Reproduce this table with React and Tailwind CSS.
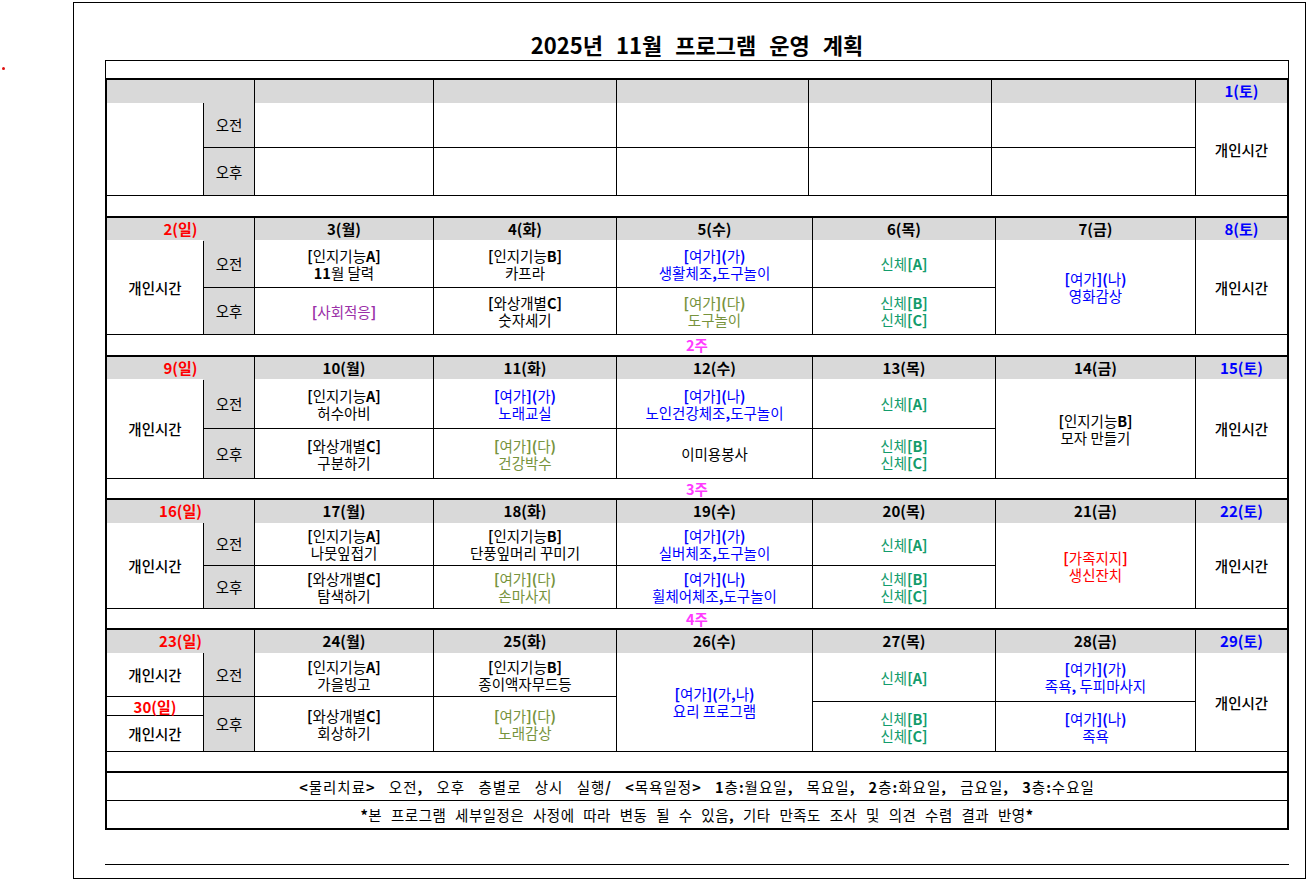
import React from "react"

// 색상
const RED = "text-[#ff0000]"
const BLUE = "text-[#0000ff]"
const OLIVE = "text-[#77933c]"
const TEAL = "text-[#139c6c]"
const PURPLE = "text-[#9b30a8]"
const PINK = "text-[#ff3cff]"

const GRID_TOP = "grid grid-cols-[96px_50px_178px_182px_191px_182px_203px_91px] gap-px"
const GRID_WEEK = "grid grid-cols-[96px_50px_178px_182px_195px_182px_199px_91px] gap-px"

// 영문/숫자는 원본처럼 굵게 보이도록
function Mixed({ text }) {
  const parts = text.split(/([!-~]+)/)
  return (
    <span className="whitespace-pre">
      {parts.map((p, i) =>
        /^[!-~]+$/.test(p) ? (
          <span key={i} className="font-bold">{p}</span>
        ) : (
          <span key={i}>{p}</span>
        )
      )}
    </span>
  )
}

function Cell({ lines = [], color = "text-black", className = "" }) {
  return (
    <div className={`bg-white flex flex-col items-center justify-center text-center text-[14.5px] leading-[17px] ${color} ${className}`}>
      {lines.map((l, i) => (
        <Mixed key={i} text={l} />
      ))}
    </div>
  )
}

function Gray({ children, className = "" }) {
  return (
    <div className={`bg-[#d9d9d9] flex items-center justify-center text-[14.5px] ${className}`}>{children}</div>
  )
}

function HeaderRow({ days, grid, height = "h-[21px]" }) {
  return (
    <div className={`${grid} ${height}`}>
      {days.map((d, i) => (
        <div
          key={i}
          className={`bg-[#d9d9d9] flex items-center justify-center text-[15px] font-bold ${i === 0 ? "col-span-2" : ""} ${d.color || "text-black"}`}
        >
          {d.label}
        </div>
      ))}
    </div>
  )
}

function WeekLabel({ text, height = "h-[20px]" }) {
  return (
    <div className={`mt-px bg-white ${height} flex items-center justify-center text-[14.5px] font-bold ${PINK}`}>
      {text}
    </div>
  )
}

const personal = ["개인시간"]

const weeks = [
  {
    days: [
      { label: "2(일)", color: RED },
      { label: "3(월)" },
      { label: "4(화)" },
      { label: "5(수)" },
      { label: "6(목)" },
      { label: "7(금)" },
      { label: "8(토)", color: BLUE },
    ],
    headerH: "h-[20px]",
    rows: "grid-rows-[47px_46px]",
    am: [
      { lines: ["[인지기능A]", "11월 달력"] },
      { lines: ["[인지기능B]", "카프라"] },
      { lines: ["[여가](가)", "생활체조,도구놀이"], color: BLUE },
      { lines: ["신체[A]"], color: TEAL },
    ],
    pm: [
      { lines: ["[사회적응]"], color: PURPLE },
      { lines: ["[와상개별C]", "숫자세기"] },
      { lines: ["[여가](다)", "도구놀이"], color: OLIVE },
      { lines: ["신체[B]", "신체[C]"], color: TEAL },
    ],
    fri: { lines: ["[여가](나)", "영화감상"], color: BLUE },
    label: "2주",
    labelH: "h-[20px]",
  },
  {
    days: [
      { label: "9(일)", color: RED },
      { label: "10(월)" },
      { label: "11(화)" },
      { label: "12(수)" },
      { label: "13(목)" },
      { label: "14(금)" },
      { label: "15(토)", color: BLUE },
    ],
    headerH: "h-[20px]",
    rows: "grid-rows-[49px_49px]",
    am: [
      { lines: ["[인지기능A]", "허수아비"] },
      { lines: ["[여가](가)", "노래교실"], color: BLUE },
      { lines: ["[여가](나)", "노인건강체조,도구놀이"], color: BLUE },
      { lines: ["신체[A]"], color: TEAL },
    ],
    pm: [
      { lines: ["[와상개별C]", "구분하기"] },
      { lines: ["[여가](다)", "건강박수"], color: OLIVE },
      { lines: ["이미용봉사"] },
      { lines: ["신체[B]", "신체[C]"], color: TEAL },
    ],
    fri: { lines: ["[인지기능B]", "모자 만들기"] },
    label: "3주",
    labelH: "h-[19px]",
  },
  {
    days: [
      { label: "16(일)", color: RED },
      { label: "17(월)" },
      { label: "18(화)" },
      { label: "19(수)" },
      { label: "20(목)" },
      { label: "21(금)" },
      { label: "22(토)", color: BLUE },
    ],
    headerH: "h-[21px]",
    rows: "grid-rows-[42px_42px]",
    am: [
      { lines: ["[인지기능A]", "나뭇잎접기"] },
      { lines: ["[인지기능B]", "단풍잎머리 꾸미기"] },
      { lines: ["[여가](가)", "실버체조,도구놀이"], color: BLUE },
      { lines: ["신체[A]"], color: TEAL },
    ],
    pm: [
      { lines: ["[와상개별C]", "탐색하기"] },
      { lines: ["[여가](다)", "손마사지"], color: OLIVE },
      { lines: ["[여가](나)", "휠체어체조,도구놀이"], color: BLUE },
      { lines: ["신체[B]", "신체[C]"], color: TEAL },
    ],
    fri: { lines: ["[가족지지]", "생신잔치"], color: RED },
    label: "4주",
    labelH: "h-[19px]",
  },
]

function WeekBlock({ week }) {
  return (
    <div className="mt-[2px]">
      <HeaderRow days={week.days} grid={GRID_WEEK} height={week.headerH} />
      <div className={`mt-[2px] ${GRID_WEEK} ${week.rows}`}>
        <Cell lines={personal} className="row-span-2 font-medium" />
        <Gray>오전</Gray>
        {week.am.map((c, i) => (
          <Cell key={i} {...c} />
        ))}
        <Cell {...week.fri} className="row-span-2" />
        <Cell lines={personal} className="row-span-2 font-medium" />
        <Gray>오후</Gray>
        {week.pm.map((c, i) => (
          <Cell key={i} {...c} />
        ))}
      </div>
      <WeekLabel text={week.label} height={week.labelH} />
    </div>
  )
}

export default function App() {
  const emptyDays = [{}, {}, {}, {}, {}, {}, { label: "1(토)", color: BLUE }]

  return (
    <div className="relative w-[1312px] h-[880px] bg-white pt-[2px] pl-[73px] font-['Noto_Sans_CJK_KR','Noto_Sans',sans-serif] text-black">
      {/* 빨간 점 */}
      <div className="absolute left-[2px] top-[67px] w-[3px] h-[3px] rounded-full bg-[#e01010]" />

      <div className="w-[1233px] h-[877px] border border-black pl-[31px]">
        {/* 제목 */}
        <div className="w-[1184px] h-[57px] pt-[27px] text-center text-[22px] leading-[28px] font-bold [word-spacing:8px]">
          2025년 11월 프로그램 운영 계획
        </div>

        <div className="w-[1184px] h-[18px] border-t border-x border-black" />

        {/* 표 본문 */}
        <div className="w-[1184px] bg-black px-[2px] pt-[2px] pb-[2px]">
          {/* 1주 (빈 주) */}
          <HeaderRow days={emptyDays} grid={GRID_TOP} height="h-[21px]" />
          <div className={`mt-[2px] ${GRID_TOP} grid-rows-[44px_47px]`}>
            <Cell className="row-span-2" />
            <Gray>오전</Gray>
            <Cell />
            <Cell />
            <Cell />
            <Cell />
            <Cell />
            <Cell lines={personal} className="row-span-2 font-medium" />
            <Gray>오후</Gray>
            <Cell />
            <Cell />
            <Cell />
            <Cell />
            <Cell />
          </div>
          <div className="mt-px h-[20px] bg-white" />

          {weeks.map((w, i) => (
            <WeekBlock key={i} week={w} />
          ))}

          {/* 5주 */}
          <div className="mt-[2px]">
            <HeaderRow
              days={[
                { label: "23(일)", color: RED },
                { label: "24(월)" },
                { label: "25(화)" },
                { label: "26(수)" },
                { label: "27(목)" },
                { label: "28(금)" },
                { label: "29(토)", color: BLUE },
              ]}
              grid={GRID_WEEK}
              height="h-[21px]"
            />
            <div className={`mt-[2px] ${GRID_WEEK} grid-rows-[43px_4px_13px_35px]`}>
              <Cell lines={personal} className="col-start-1 row-start-1 font-medium" />
              <Cell lines={["30(일)"]} color={RED} className="col-start-1 row-start-2 row-span-2 font-bold text-[15px]" />
              <Cell lines={personal} className="col-start-1 row-start-4 font-medium" />
              <Gray className="col-start-2 row-start-1">오전</Gray>
              <Gray className="col-start-2 row-start-2 row-span-3">오후</Gray>
              <Cell lines={["[인지기능A]", "가을빙고"]} className="col-start-3 row-start-1" />
              <Cell lines={["[와상개별C]", "회상하기"]} className="col-start-3 row-start-2 row-span-3" />
              <Cell lines={["[인지기능B]", "종이액자무드등"]} className="col-start-4 row-start-1" />
              <Cell lines={["[여가](다)", "노래감상"]} color={OLIVE} className="col-start-4 row-start-2 row-span-3" />
              <Cell lines={["[여가](가,나)", "요리 프로그램"]} color={BLUE} className="col-start-5 row-start-1 row-span-4" />
              <Cell lines={["신체[A]"]} color={TEAL} className="col-start-6 row-start-1 row-span-2" />
              <Cell lines={["신체[B]", "신체[C]"]} color={TEAL} className="col-start-6 row-start-3 row-span-2" />
              <Cell lines={["[여가](가)", "족욕, 두피마사지"]} color={BLUE} className="col-start-7 row-start-1 row-span-2" />
              <Cell lines={["[여가](나)", "족욕"]} color={BLUE} className="col-start-7 row-start-3 row-span-2" />
              <Cell lines={personal} className="col-start-8 row-start-1 row-span-4 font-medium" />
            </div>
            <div className="mt-px h-[19px] bg-white" />
          </div>

          {/* 하단 안내 */}
          <div className="mt-[2px] h-[27px] bg-white flex items-center justify-center text-[14.5px] tracking-[1px] [word-spacing:9px]">
            <Mixed text="<물리치료> 오전, 오후 층별로 상시 실행/ <목욕일정> 1층:월요일, 목요일, 2층:화요일, 금요일, 3층:수요일" />
          </div>
          <div className="mt-px h-[27px] bg-white flex items-center justify-center text-[14.5px] tracking-[0.5px] [word-spacing:5px]">
            <Mixed text="*본 프로그램 세부일정은 사정에 따라 변동 될 수 있음, 기타 만족도 조사 및 의견 수렴 결과 반영*" />
          </div>
        </div>

        <div className="mt-[34px] w-[1184px] h-px bg-black" />
      </div>
    </div>
  )
}
